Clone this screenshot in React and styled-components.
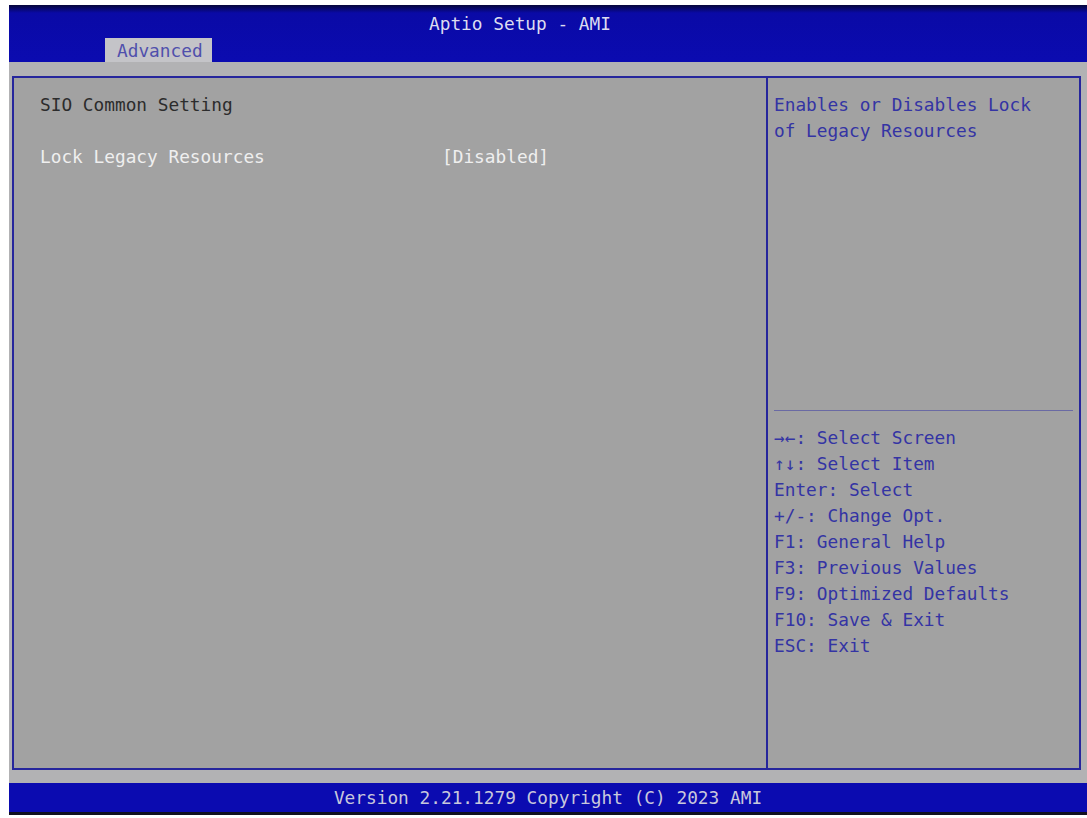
import React from "react";
import styled, { createGlobalStyle } from "styled-components";

const keyHelp = [
  "\u2192\u2190: Select Screen",
  "\u2191\u2193: Select Item",
  "Enter: Select",
  "+/-: Change Opt.",
  "F1: General Help",
  "F3: Previous Values",
  "F9: Optimized Defaults",
  "F10: Save & Exit",
  "ESC: Exit",
];

function App() {
  return (
    <>
      <GlobalStyle />
      <Screen>
        <Header>
          <Title>Aptio Setup - AMI</Title>
          <Tabs>
            <Tab>Advanced</Tab>
          </Tabs>
        </Header>
        <Body>
          <Panel>
            <Main>
              <Line $tone="dark">SIO Common Setting</Line>
              <Line />
              <Row>
                <Label>Lock Legacy Resources</Label>
                <Value>[Disabled]</Value>
              </Row>
            </Main>
            <Side>
              <HelpArea>
                <Line $tone="blue">Enables or Disables Lock</Line>
                <Line $tone="blue">of Legacy Resources</Line>
              </HelpArea>
              <Divider />
              <Keys>
                {keyHelp.map((k) => (
                  <Line key={k} $tone="blue">{k}</Line>
                ))}
              </Keys>
            </Side>
          </Panel>
        </Body>
        <Footer>Version 2.21.1279 Copyright (C) 2023 AMI</Footer>
      </Screen>
    </>
  );
}

const GlobalStyle = createGlobalStyle`
  body {
    margin: 0;
    background: #ffffff;
    font-family: "DejaVu Sans Mono", "Liberation Mono", monospace;
  }
`;

const Screen = styled.div`
  width: 1078px;
  height: 810px;
  padding: 5px 0 0 9px;
  display: flex;
  flex-direction: column;
  font-size: 17.8px;
`;

const Header = styled.div`
  height: 57px;
  background: linear-gradient(#06063a 0, #0a0aa6 8px, #0b0bb0 100%);
  display: flex;
  flex-direction: column;
  justify-content: space-between;
`;

const Title = styled.div`
  text-align: center;
  color: #dcdcf0;
  padding-top: 9px;
  padding-right: 56px;
  line-height: 20px;
`;

const Tabs = styled.div`
  display: flex;
  padding-left: 96px;
`;

const Tab = styled.div`
  background: #c4c4c8;
  color: #5050ac;
  padding: 0 12px;
  height: 24px;
  line-height: 26px;
  width: 83px;
`;

const Body = styled.div`
  flex: 1;
  background: #b2b2b4;
  padding: 14px 6px 13px 3px;
  display: flex;
`;

const Panel = styled.div`
  flex: 1;
  display: flex;
  border: 2px solid #26269c;
  background: #a2a2a2;
`;

const Main = styled.div`
  width: 726px;
  padding: 14px 0 0 26px;
  border-right: 2px solid #26269c;
`;

const Line = styled.div`
  height: 26px;
  line-height: 26px;
  white-space: pre;
  color: ${(p) =>
    p.$tone === "dark" ? "#2c2c2c" : p.$tone === "blue" ? "#3434a4" : "#efefef"};
`;

const Row = styled.div`
  display: flex;
  height: 26px;
  line-height: 26px;
  color: #efefef;
`;

const Label = styled.span`
  width: 402px;
`;

const Value = styled.span``;

const Side = styled.div`
  flex: 1;
  display: flex;
  flex-direction: column;
  padding: 14px 6px 0 6px;
`;

const HelpArea = styled.div`
  height: 318px;
`;

const Divider = styled.div`
  height: 1px;
  background: #6a6aa4;
  margin-bottom: 14px;
`;

const Keys = styled.div`
  display: flex;
  flex-direction: column;
`;

const Footer = styled.div`
  height: 29px;
  line-height: 29px;
  background: #0b0bb0;
  border-bottom: 3px solid #101020;
  color: #c8c8dc;
  text-align: center;
`;

export default App;
